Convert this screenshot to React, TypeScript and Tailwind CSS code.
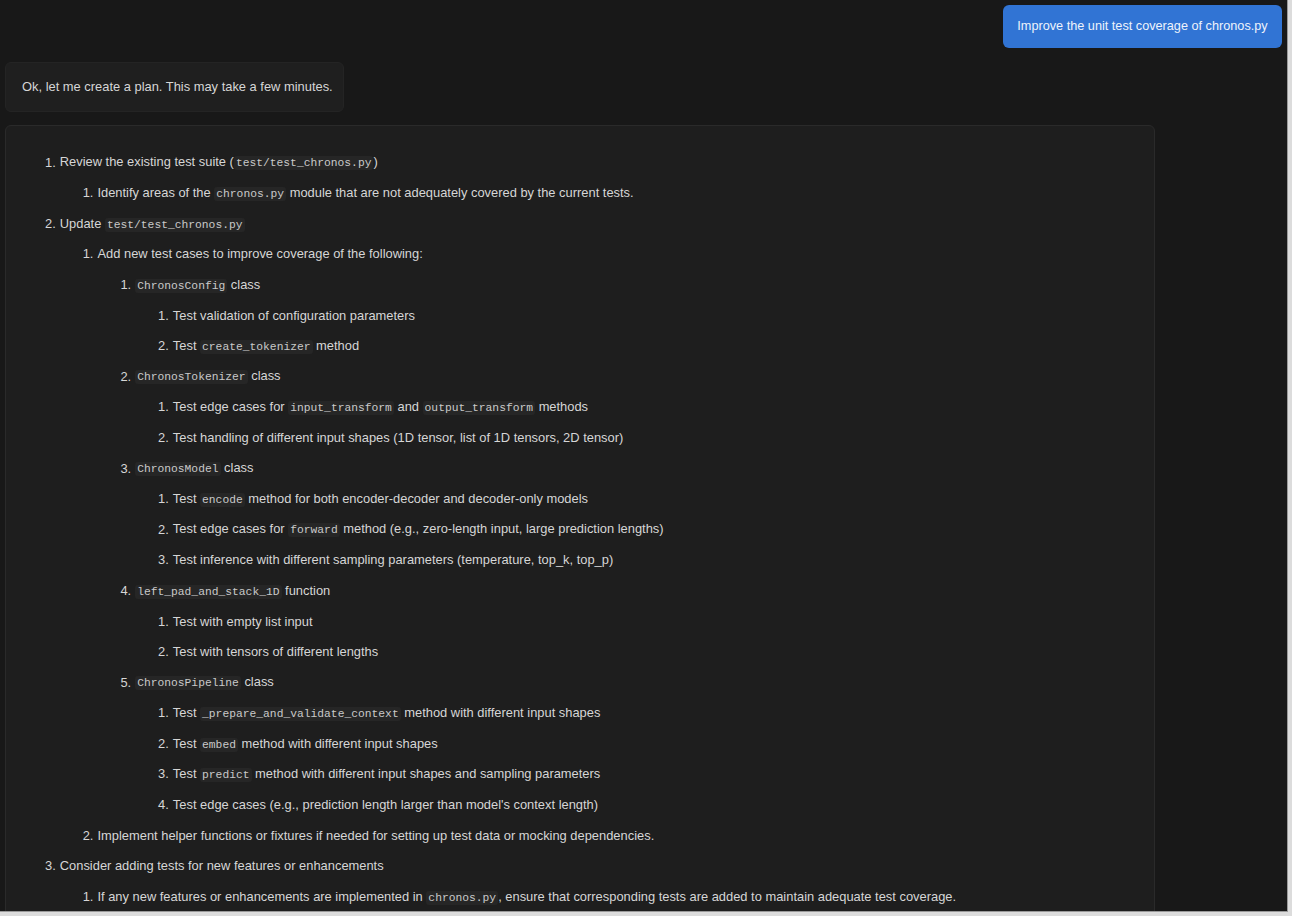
import React from "react";

type Node = { text: React.ReactNode; children?: Node[] };

function Code({ children }: { children: React.ReactNode }) {
  return (
    <code className="rounded-[3px] bg-[#262626] px-[2px] py-[1px] font-['Liberation_Mono','DejaVu_Sans_Mono',monospace] text-[11.3px] text-[#c9c9c9]">
      {children}
    </code>
  );
}

const plan: Node[] = [
  {
    text: (
      <>
        Review the existing test suite (<Code>test/test_chronos.py</Code>)
      </>
    ),
    children: [
      {
        text: (
          <>
            Identify areas of the <Code>chronos.py</Code> module that are not adequately covered by the current tests.
          </>
        ),
      },
    ],
  },
  {
    text: (
      <>
        Update <Code>test/test_chronos.py</Code>
      </>
    ),
    children: [
      {
        text: "Add new test cases to improve coverage of the following:",
        children: [
          {
            text: (
              <>
                <Code>ChronosConfig</Code> class
              </>
            ),
            children: [
              { text: "Test validation of configuration parameters" },
              {
                text: (
                  <>
                    Test <Code>create_tokenizer</Code> method
                  </>
                ),
              },
            ],
          },
          {
            text: (
              <>
                <Code>ChronosTokenizer</Code> class
              </>
            ),
            children: [
              {
                text: (
                  <>
                    Test edge cases for <Code>input_transform</Code> and <Code>output_transform</Code> methods
                  </>
                ),
              },
              { text: "Test handling of different input shapes (1D tensor, list of 1D tensors, 2D tensor)" },
            ],
          },
          {
            text: (
              <>
                <Code>ChronosModel</Code> class
              </>
            ),
            children: [
              {
                text: (
                  <>
                    Test <Code>encode</Code> method for both encoder-decoder and decoder-only models
                  </>
                ),
              },
              {
                text: (
                  <>
                    Test edge cases for <Code>forward</Code> method (e.g., zero-length input, large prediction lengths)
                  </>
                ),
              },
              { text: "Test inference with different sampling parameters (temperature, top_k, top_p)" },
            ],
          },
          {
            text: (
              <>
                <Code>left_pad_and_stack_1D</Code> function
              </>
            ),
            children: [
              { text: "Test with empty list input" },
              { text: "Test with tensors of different lengths" },
            ],
          },
          {
            text: (
              <>
                <Code>ChronosPipeline</Code> class
              </>
            ),
            children: [
              {
                text: (
                  <>
                    Test <Code>_prepare_and_validate_context</Code> method with different input shapes
                  </>
                ),
              },
              {
                text: (
                  <>
                    Test <Code>embed</Code> method with different input shapes
                  </>
                ),
              },
              {
                text: (
                  <>
                    Test <Code>predict</Code> method with different input shapes and sampling parameters
                  </>
                ),
              },
              { text: "Test edge cases (e.g., prediction length larger than model's context length)" },
            ],
          },
        ],
      },
      { text: "Implement helper functions or fixtures if needed for setting up test data or mocking dependencies." },
    ],
  },
  {
    text: "Consider adding tests for new features or enhancements",
    children: [
      {
        text: (
          <>
            If any new features or enhancements are implemented in <Code>chronos.py</Code>, ensure that corresponding tests are added to maintain adequate test coverage.
          </>
        ),
      },
    ],
  },
];

function PlanList({ items, nested }: { items: Node[]; nested?: boolean }) {
  return (
    <ol className={nested ? "pl-[37.7px]" : ""}>
      {items.map((item, i) => (
        <li key={i}>
          <div className="flex h-[30.6px] items-center whitespace-nowrap">
            <span className="mr-[4px]">{i + 1}.</span>
            <span>{item.text}</span>
          </div>
          {item.children && <PlanList items={item.children} nested />}
        </li>
      ))}
    </ol>
  );
}

export default function App() {
  return (
    <div className="h-[916px] w-[1292px] overflow-hidden bg-[#dcdcdc]">
      <div className="h-[912px] w-[1288px] overflow-hidden border-r border-b border-[#9a9a9a] bg-[#181818] font-['Liberation_Sans',Arial,sans-serif] text-[12.9px] text-[#d6d6d6]">
        <div className="flex justify-end pt-[5px] pr-[5px]">
          <div className="flex h-[43px] w-[279px] items-center justify-center rounded-[6px] bg-[#3174d4] text-[12.7px] text-[#eef3fb]">
            Improve the unit test coverage of chronos.py
          </div>
        </div>
        <div className="mt-[14px] pl-[5px]">
          <div className="flex h-[50px] w-[339px] items-center rounded-[6px] border border-[#242424] bg-[#1f1f1f] pl-[16px]">
            Ok, let me create a plan. This may take a few minutes.
          </div>
        </div>
        <div className="mt-[13px] pl-[5px]">
          <div className="w-[1150px] rounded-t-[6px] border border-[#2a2a2a] bg-[#1e1e1e] pt-[21px] pl-[39px] pb-[20px]">
            <PlanList items={plan} />
          </div>
        </div>
      </div>
    </div>
  );
}
